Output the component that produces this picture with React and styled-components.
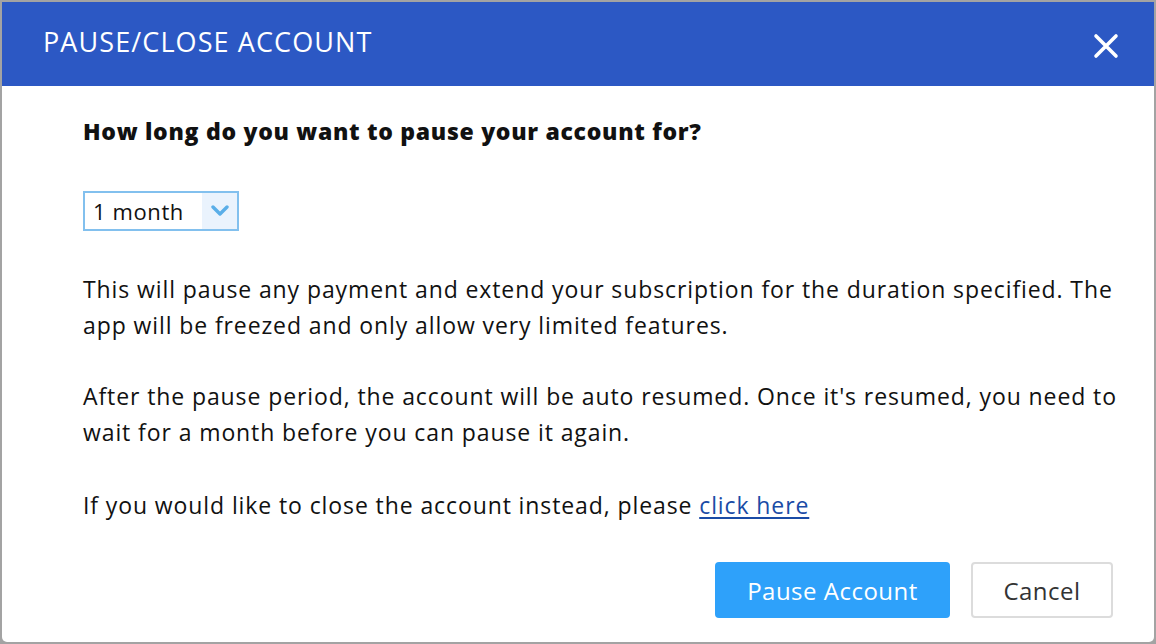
import React from "react";
import styled, { createGlobalStyle } from "styled-components";

const Global = createGlobalStyle`
  html, body { margin: 0; padding: 0; background: #a3a3a3; }
  body { font-family: "Open Sans", "Noto Sans", sans-serif; }
  #root { width: 1156px; height: 644px; padding: 2px; box-sizing: border-box; }
`;

const Modal = styled.div`
  width: 1152px;
  height: 640px;
  background: #fff;
  border-radius: 0 0 5px 5px;
  display: flex;
  flex-direction: column;
  overflow: hidden;
`;

const Header = styled.div`
  height: 84px;
  background: #2c58c4;
  display: flex;
  align-items: center;
  justify-content: space-between;
  padding: 0 34px 0 41px;
  flex-shrink: 0;
`;

const Title = styled.h1`
  margin: 0 0 4px;
  color: #fff;
  font-size: 27px;
  font-weight: 400;
  line-height: 36px;
  letter-spacing: 1.1px;
`;

const CloseButton = styled.button`
  background: none;
  border: 0;
  padding: 0;
  width: 28px;
  height: 28px;
  cursor: pointer;
  display: flex;
  align-items: center;
  justify-content: center;
  margin-top: 4px;
`;

const Body = styled.div`
  flex: 1;
  padding: 27px 21px 0 81px;
  display: flex;
  flex-direction: column;
  color: #111;
  font-size: 23px;
  line-height: 36px;
`;

const Question = styled.h2`
  margin: 0;
  font-size: 23px;
  font-weight: 800;
  line-height: 36px;
  letter-spacing: 0.7px;
`;

const SelectBox = styled.div`
  margin-top: 42px;
  width: 156px;
  height: 40px;
  box-sizing: border-box;
  border: 2px solid #82c0ee;
  display: flex;
  align-items: stretch;
`;

const SelectValue = styled.span`
  flex: 1;
  padding-left: 8px;
  display: flex;
  align-items: center;
  font-size: 22px;
  letter-spacing: 0.6px;
  color: #111;
`;

const SelectArrow = styled.span`
  width: 35px;
  background: #eaf3fd;
  display: flex;
  align-items: center;
  justify-content: center;
`;

const Paragraph = styled.p`
  margin: ${(p) => p.$top}px 0 0;
  font-size: 23px;
  line-height: 36px;
  letter-spacing: 0.9px;
`;

const Link = styled.a`
  color: #1a4ba6;
  text-decoration: underline;
  text-underline-offset: 3px;
  text-decoration-thickness: 1.5px;
`;

const Footer = styled.div`
  display: flex;
  justify-content: flex-end;
  gap: 21px;
  padding: 0 20px 0 0;
  margin-top: 39px;
`;

const Button = styled.button`
  height: 56px;
  border-radius: 4px;
  font-family: inherit;
  font-size: 24px;
  letter-spacing: 0.5px;
  cursor: pointer;
  box-sizing: border-box;
  padding: 0;
  width: ${(p) => p.$w}px;
  background: ${(p) => (p.$primary ? "#2ea1fa" : "#fff")};
  color: ${(p) => (p.$primary ? "#fff" : "#333")};
  border: ${(p) => (p.$primary ? "0" : "2px solid #dcdcdc")};
`;

export default function App() {
  return (
    <>
      <Global />
      <Modal>
        <Header>
          <Title>PAUSE/CLOSE ACCOUNT</Title>
          <CloseButton aria-label="Close">
            <svg width="26" height="26" viewBox="0 0 26 26">
              <path d="M3 3 L23 23 M23 3 L3 23" stroke="#fff" strokeWidth="3.6" strokeLinecap="round" />
            </svg>
          </CloseButton>
        </Header>
        <Body>
          <Question>How long do you want to pause your account for?</Question>
          <SelectBox>
            <SelectValue>1 month</SelectValue>
            <SelectArrow>
              <svg width="18" height="12" viewBox="0 0 18 12">
                <path d="M2 2 L9 9 L16 2" stroke="#5aaee8" strokeWidth="3.4" fill="none" strokeLinecap="round" strokeLinejoin="round" />
              </svg>
            </SelectArrow>
          </SelectBox>
          <Paragraph $top={40}>
            This will pause any payment and extend your subscription for the duration specified. The app will be freezed and only allow very limited features.
          </Paragraph>
          <Paragraph $top={35}>
            After the pause period, the account will be auto resumed. Once it's resumed, you need to wait for a month before you can pause it again.
          </Paragraph>
          <Paragraph $top={37}>
            If you would like to close the account instead, please <Link href="#">click here</Link>
          </Paragraph>
          <Footer>
            <Button $primary $w={235}>Pause Account</Button>
            <Button $w={142}>Cancel</Button>
          </Footer>
        </Body>
      </Modal>
    </>
  );
}
